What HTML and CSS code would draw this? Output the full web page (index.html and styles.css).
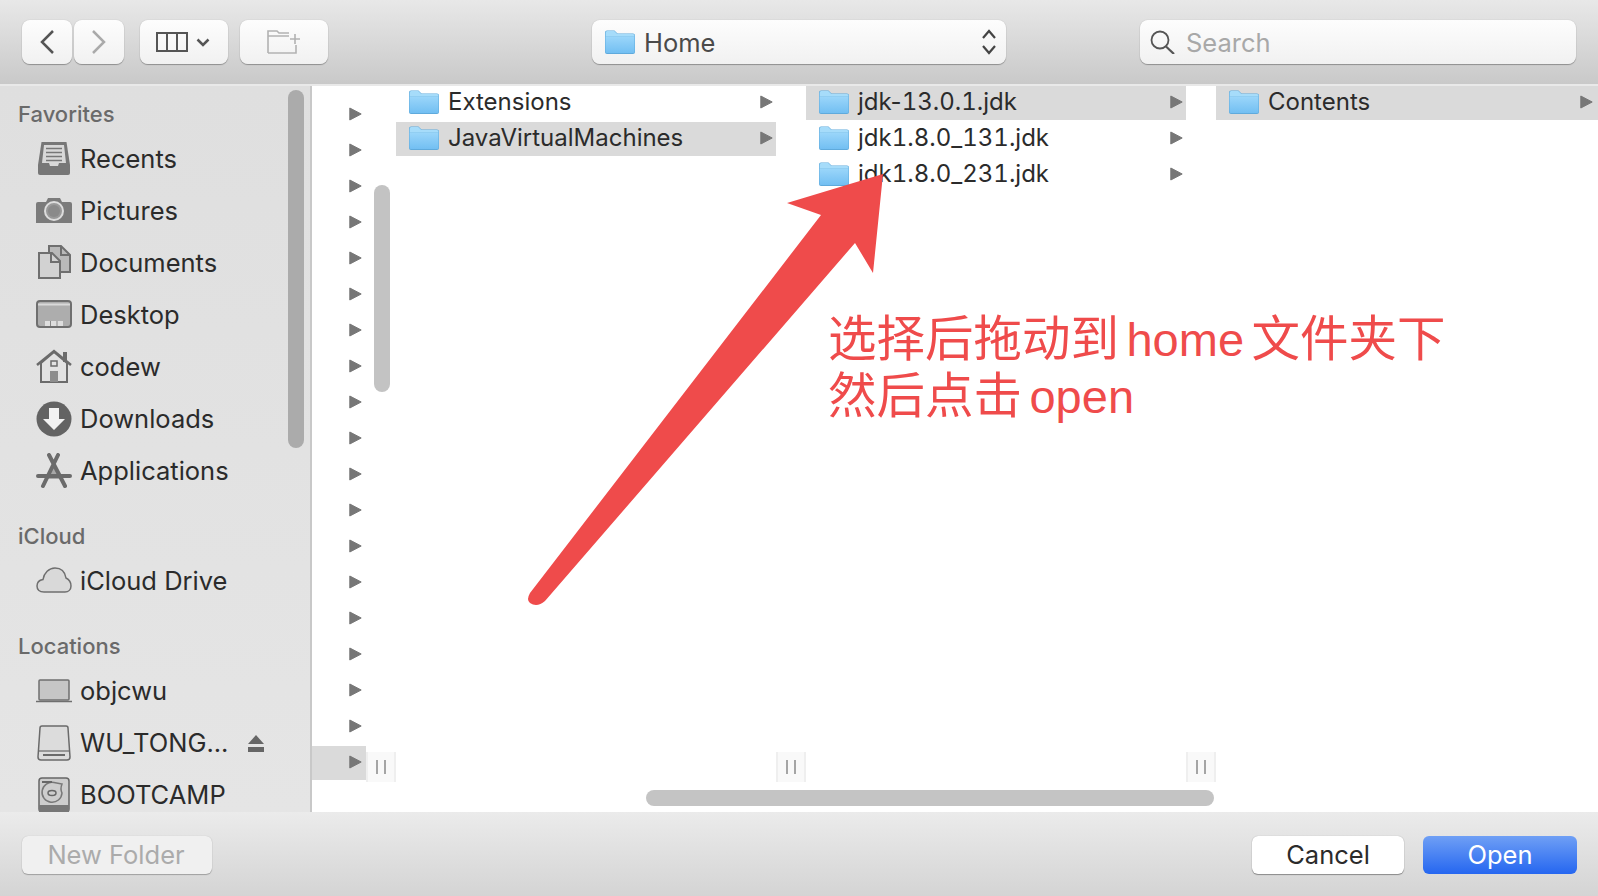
FILE: index.html
```html
<!DOCTYPE html>
<html lang="en">
<head>
    <meta charset="UTF-8">
    <meta name="viewport" content="width=device-width, initial-scale=1.0">
    <title>Open</title>
    <link rel="stylesheet" href="styles.css">
</head>
<body>
    <svg class="defs" width="0" height="0">
        <defs>
            <linearGradient id="folder-fill" x1="0" y1="0" x2="0" y2="1">
                <stop offset="0" stop-color="#9bd6fa"/>
                <stop offset="1" stop-color="#72bff2"/>
            </linearGradient>
            <symbol id="folder" viewBox="0 0 30 24">
                <path d="M0 2.500A2 2 0 0 1 2 .5h7.500l3 3H28a2 2 0 0 1 2 2V22a2 2 0 0 1-2 2H2a2 2 0 0 1-2-2z" fill="#5faadc"/>
                <path d="M.5 6.500h29V21.500a1.500 1.500 0 0 1-1.500 1.500H2a1.500 1.500 0 0 1-1.500-1.500z" fill="url(#folder-fill)"/>
                <path d="M.6 2.800A1.700 1.700 0 0 1 2.300 1.100h7l3 3H28a1.500 1.500 0 0 1 1.500 1.500v1H.6z" fill="#a6dcfa"/>
            </symbol>
            <symbol id="tri" viewBox="0 0 13 14">
                <path d="M.8 1 12.200 7 .8 13z" fill="#777" stroke="#777" stroke-linejoin="round"/>
            </symbol>
        </defs>
    </svg>

    <div class="window">
        <header class="toolbar">
            <button class="tool nav">
                <svg width="14" height="24" viewBox="0 0 14 24"><path d="M13 1 2 12l11 11" fill="none" stroke="#555" stroke-width="2.500"/></svg>
            </button>
            <button class="tool nav forward">
                <svg width="14" height="24" viewBox="0 0 14 24"><path d="M1 1l11 11L1 23" fill="none" stroke="#aaa" stroke-width="2.500"/></svg>
            </button>
            <button class="tool view-btn">
                <svg width="32" height="20" viewBox="0 0 32 20"><path d="M1 1h30v18H1zM11 1v18M21 1v18" fill="none" stroke="#555" stroke-width="2"/></svg>
                <svg width="14" height="9" viewBox="0 0 14 9"><path d="M1.500 1.500 7 7l5.500-5.500" fill="none" stroke="#555" stroke-width="2.500"/></svg>
            </button>
            <button class="tool newfolder-btn">
                <svg width="34" height="24" viewBox="0 0 34 24"><path d="M1 23V1h9l2 2h10M1 6h21M29 15v8H1M28 4v10M23 9h10" fill="none" stroke="#b2b2b2" stroke-width="1.600"/></svg>
            </button>
            <div class="tool path-select">
                <svg class="folder-icon" width="30" height="24"><use href="#folder"/></svg>
                <span class="path-name">Home</span>
                <svg class="updown" width="16" height="26" viewBox="0 0 16 26"><path d="M2 9l6-7 6 7M2 17l6 7 6-7" fill="none" stroke="#444" stroke-width="2.200"/></svg>
            </div>
            <div class="tool search">
                <svg width="26" height="24" viewBox="0 0 26 24"><circle cx="10" cy="10" r="8.500" fill="none" stroke="#555" stroke-width="1.800"/><path d="M16 16.500 24 24" stroke="#555" stroke-width="2.200"/></svg>
                <span class="search-text">Search</span>
            </div>
        </header>

        <main class="content">
            <nav class="sidebar">
                <div class="side-head">Favorites</div>
                <div class="side-item">
                    <svg width="36" height="36" viewBox="0 0 36 36"><path d="M5.500 1h25L34 24v8a2 2 0 0 1-2 2H4a2 2 0 0 1-2-2v-8z" fill="#777"/><path d="M8 4h20l2 18h-7l-1 3h-8l-1-3H6z" fill="#d8d8d8"/><path d="M10 7.500h16M10 11.500h16M10 15.500h16M10 19.500h16" stroke="#777" stroke-width="1.500"/></svg>
                    <span>Recents</span>
                </div>
                <div class="side-item">
                    <svg width="36" height="36" viewBox="0 0 36 36"><path d="M2 9h8l2-4h12l2 4h8a2 2 0 0 1 2 2v19H0V11a2 2 0 0 1 2-2z" fill="#7b7b7b"/><circle cx="18" cy="18" r="9" fill="#999" stroke="#ddd" stroke-width="2"/><circle cx="18" cy="18" r="6" fill="#8a8a8a"/></svg>
                    <span>Pictures</span>
                </div>
                <div class="side-item">
                    <svg width="36" height="36" viewBox="0 0 36 36"><path d="M13 1h12l9 9v17H13z" fill="#b9b9b9" stroke="#6f6f6f" stroke-width="2"/><path d="M25 1v9h9" fill="none" stroke="#6f6f6f" stroke-width="2"/><path d="M3 8h13l8 8v17H3z" fill="#d2d2d2" stroke="#6f6f6f" stroke-width="2"/><path d="M15 8v9h9" fill="none" stroke="#6f6f6f" stroke-width="2"/></svg>
                    <span>Documents</span>
                </div>
                <div class="side-item">
                    <svg width="36" height="36" viewBox="0 0 36 36"><rect x="1" y="4" width="34" height="26" rx="3" fill="#adadad" stroke="#6f6f6f" stroke-width="2"/><path d="M2 7.500h32" stroke="#d9d9d9" stroke-width="2"/><path d="M9 24h18v5H9z" fill="#dedede"/><path d="M14.500 24v5M21 24v5" stroke="#8a8a8a"/></svg>
                    <span>Desktop</span>
                </div>
                <div class="side-item">
                    <svg width="36" height="36" viewBox="0 0 36 36"><path d="M5 14 18 3l13 11v19H5z" fill="#e2e2e2" stroke="#6b6b6b" stroke-width="2"/><path d="M1 16 18 2l17 14" fill="none" stroke="#6b6b6b" stroke-width="2.500"/><path d="M27 3h4v10h-4z" fill="#6b6b6b"/><rect x="15" y="12" width="6" height="5" fill="none" stroke="#6b6b6b" stroke-width="1.500"/><path d="M14 22h8v11h-8z" fill="#8d8d8d"/></svg>
                    <span>codew</span>
                </div>
                <div class="side-item">
                    <svg width="36" height="36" viewBox="0 0 36 36"><circle cx="18" cy="18" r="17.500" fill="#636363"/><path d="M13 7h10v11h6L18 29 7 18h6z" fill="#f2f2f2"/></svg>
                    <span>Downloads</span>
                </div>
                <div class="side-item">
                    <svg width="36" height="36" viewBox="0 0 36 36"><path d="M18 10 9 26h18z" fill="#a8a8a8"/><path d="M22 2 7 33M13 2l16 31M2 23h32" fill="none" stroke="#6b6b6b" stroke-width="4" stroke-linecap="round"/></svg>
                    <span>Applications</span>
                </div>

                <div class="side-head spaced">iCloud</div>
                <div class="side-item">
                    <svg width="36" height="36" viewBox="0 0 36 36"><path d="M8 29C3 29 1 26 1 23c0-4 3-6 6-6.500C8 10 13 5 19 5c6 0 10 4 11 10 3 1.500 5 4 5 8 0 3.500-2.500 6-6 6z" fill="#d9d9d9" stroke="#6f6f6f" stroke-width="1.500"/></svg>
                    <span>iCloud Drive</span>
                </div>

                <div class="side-head spaced">Locations</div>
                <div class="side-item">
                    <svg width="36" height="36" viewBox="0 0 36 36"><rect x="3" y="7" width="30" height="20" rx="1" fill="#c6c6c6" stroke="#6f6f6f" stroke-width="1.500"/><path d="M0 28.500h36" stroke="#6f6f6f" stroke-width="1.500"/></svg>
                    <span>objcwu</span>
                </div>
                <div class="side-item">
                    <svg width="36" height="36" viewBox="0 0 36 36"><path d="M6 1h24a2 2 0 0 1 2 2l2 29a3 3 0 0 1-3 3H5a3 3 0 0 1-3-3L4 3a2 2 0 0 1 2-2z" fill="#dcdcdc" stroke="#6a6a6a" stroke-width="1.500"/><path d="M2 26h32" stroke="#6a6a6a" stroke-width="1.200"/><path d="M7 30h22" stroke="#6a6a6a" stroke-width="2"/></svg>
                    <span>WU_TONG...</span>
                    <svg class="eject" width="16" height="17" viewBox="0 0 16 17"><path d="M8 0l8 9H0zM0 12h16v5H0z" fill="#666"/></svg>
                </div>
                <div class="side-item">
                    <svg width="36" height="36" viewBox="0 0 36 36"><rect x="3" y="1" width="30" height="34" rx="3" fill="#cdcdcd" stroke="#666" stroke-width="1.500"/><path d="M26 7C24 12 26 16 26 16A10 10 0 1 1 18 5.500z" fill="none" stroke="#777" stroke-width="1.500"/><ellipse cx="16" cy="16" rx="4" ry="2.500" fill="none" stroke="#666" stroke-width="1.500"/><path d="M6 5h10" stroke="#666" stroke-width="2"/><path d="M3 28h30v7H3z" fill="#777"/></svg>
                    <span>BOOTCAMP</span>
                </div>
                <div class="side-scroll"></div>
            </nav>

            <section class="browser">
                <div class="column first">
                    <div class="tri-row"><svg width="13" height="14"><use href="#tri"/></svg></div>
                    <div class="tri-row"><svg width="13" height="14"><use href="#tri"/></svg></div>
                    <div class="tri-row"><svg width="13" height="14"><use href="#tri"/></svg></div>
                    <div class="tri-row"><svg width="13" height="14"><use href="#tri"/></svg></div>
                    <div class="tri-row"><svg width="13" height="14"><use href="#tri"/></svg></div>
                    <div class="tri-row"><svg width="13" height="14"><use href="#tri"/></svg></div>
                    <div class="tri-row"><svg width="13" height="14"><use href="#tri"/></svg></div>
                    <div class="tri-row"><svg width="13" height="14"><use href="#tri"/></svg></div>
                    <div class="tri-row"><svg width="13" height="14"><use href="#tri"/></svg></div>
                    <div class="tri-row"><svg width="13" height="14"><use href="#tri"/></svg></div>
                    <div class="tri-row"><svg width="13" height="14"><use href="#tri"/></svg></div>
                    <div class="tri-row"><svg width="13" height="14"><use href="#tri"/></svg></div>
                    <div class="tri-row"><svg width="13" height="14"><use href="#tri"/></svg></div>
                    <div class="tri-row"><svg width="13" height="14"><use href="#tri"/></svg></div>
                    <div class="tri-row"><svg width="13" height="14"><use href="#tri"/></svg></div>
                    <div class="tri-row"><svg width="13" height="14"><use href="#tri"/></svg></div>
                    <div class="tri-row"><svg width="13" height="14"><use href="#tri"/></svg></div>
                    <div class="tri-row"><svg width="13" height="14"><use href="#tri"/></svg></div>
                    <div class="tri-row selected"><svg width="13" height="14"><use href="#tri"/></svg></div>
                    <div class="col-scroll"></div>
                    <div class="handle"></div>
                </div>
                <div class="column second">
                    <div class="file-row"><svg width="30" height="24"><use href="#folder"/></svg><span class="file-name">Extensions</span><svg class="more" width="13" height="14"><use href="#tri"/></svg></div>
                    <div class="file-row selected"><svg width="30" height="24"><use href="#folder"/></svg><span class="file-name">JavaVirtualMachines</span><svg class="more" width="13" height="14"><use href="#tri"/></svg></div>
                    <div class="handle"></div>
                </div>
                <div class="column second">
                    <div class="file-row selected"><svg width="30" height="24"><use href="#folder"/></svg><span class="file-name"><span class="plain-nums">jdk-</span>13.0.1.jdk</span><svg class="more" width="13" height="14"><use href="#tri"/></svg></div>
                    <div class="file-row"><svg width="30" height="24"><use href="#folder"/></svg><span class="file-name">jdk1.8.0_131.jdk</span><svg class="more" width="13" height="14"><use href="#tri"/></svg></div>
                    <div class="file-row"><svg width="30" height="24"><use href="#folder"/></svg><span class="file-name">jdk1.8.0_231.jdk</span><svg class="more" width="13" height="14"><use href="#tri"/></svg></div>
                    <div class="handle"></div>
                </div>
                <div class="column last">
                    <div class="file-row selected"><svg width="30" height="24"><use href="#folder"/></svg><span class="file-name">Contents</span><svg class="more" width="13" height="14"><use href="#tri"/></svg></div>
                </div>
                <div class="h-scroll"></div>
            </section>
        </main>

        <footer class="footer">
            <button class="btn disabled">New Folder</button>
            <button class="btn cancel">Cancel</button>
            <button class="btn primary">Open</button>
        </footer>

        <svg class="arrow" width="370" height="450" viewBox="520 165 370 450">
            <path d="M883 174 787 203 821 215 530 593Q526 600 530 603 537 608 545 601L855 243 873 273z" fill="#ef4b4b"/>
        </svg>
        <div class="note">选择后拖动到 <span class="note-latin">home</span> 文件夹下<br>然后点击 <span class="note-latin">open</span></div>
    </div>
</body>
</html>
```

FILE: styles.css
```css
* {
    box-sizing: border-box;
}

body {
    margin: 0;
    font-family: Inter, "Liberation Sans", sans-serif;
    color: #2b2b2b;
    overflow: hidden;
}

.defs {
    position: absolute;
}

.window {
    position: relative;
    display: flex;
    flex-direction: column;
    height: 100vh;
    background: #fff;
}

/* toolbar */
.toolbar {
    display: flex;
    height: 86px;
    padding: 20px 22px 0;
    background: linear-gradient(#e8e8e8, #c9c9c9);
    border-bottom: 2px solid #e9e9e9;
    flex-shrink: 0;
}

.tool {
    display: flex;
    align-items: center;
    height: 44px;
    padding: 0;
    border: none;
    border-radius: 8px;
    background: linear-gradient(#fdfdfd, #f1f1f1);
    box-shadow: 0 1px 1px rgba(0, 0, 0, 0.3), 0 0 1px rgba(0, 0, 0, 0.25);
}

.nav {
    width: 50px;
    justify-content: center;
}

.forward {
    margin-left: 2px;
}

.view-btn {
    width: 88px;
    margin-left: 16px;
    padding-left: 16px;
    gap: 8px;
}

.newfolder-btn {
    width: 88px;
    margin-left: 12px;
    justify-content: center;
}

.path-select {
    width: 414px;
    margin-left: 264px;
    padding-left: 13px;
}

.path-name {
    margin-left: 9px;
    font-size: 25.5px;
    color: #4a4a4a;
}

.updown {
    margin-left: auto;
    margin-right: 9px;
}

.search {
    width: 436px;
    margin-left: 134px;
    padding-left: 10px;
}

.search-text {
    margin-left: 10px;
    font-size: 25.5px;
    color: #a8a8a8;
}

/* middle */
.content {
    display: flex;
    flex: 1;
    min-height: 0;
}

.sidebar {
    position: relative;
    width: 312px;
    flex-shrink: 0;
    padding-top: 10px;
    overflow: hidden;
    background: linear-gradient(#dfdfdf, #e5e5e5);
    border-right: 2px solid #c8c8c8;
}

.side-head {
    height: 36px;
    margin-bottom: 1px;
    padding-left: 18px;
    font-size: 22px;
    font-weight: 500;
    line-height: 36px;
    color: #6a6a6a;
}

.side-head.spaced {
    margin-top: 21px;
}

.side-item {
    display: flex;
    align-items: center;
    gap: 8px;
    height: 52px;
    padding-left: 36px;
    font-size: 25.5px;
}

.side-item span {
    margin-bottom: 2px;
}

.side-item svg {
    flex-shrink: 0;
}

.side-item .eject {
    margin-left: 12px;
}

.side-scroll {
    position: absolute;
    left: 288px;
    top: 4px;
    width: 16px;
    height: 358px;
    border-radius: 8px;
    background: #ababab;
}

/* columns */
.browser {
    position: relative;
    display: flex;
    flex: 1;
    min-width: 0;
}

.column {
    position: relative;
    padding-right: 30px;
    flex-shrink: 0;
}

.column.first {
    width: 84px;
    padding-top: 12px;
}

.column.second {
    width: 410px;
}

.column.last {
    flex: 1;
    padding-right: 0;
}

.tri-row {
    display: flex;
    align-items: center;
    justify-content: flex-end;
    height: 34px;
    margin-bottom: 2px;
    padding-right: 4px;
}

.tri-row svg {
    margin-bottom: 2px;
}

.file-row {
    display: flex;
    align-items: center;
    gap: 9px;
    height: 34px;
    margin-bottom: 2px;
    padding: 0 3px 2px 13px;
    font-size: 24px;
    font-variant-numeric: tabular-nums;
}

.file-name {
    margin-bottom: 2px;
}

.plain-nums {
    font-variant-numeric: normal;
}

.more {
    margin-left: auto;
}

.column.last .file-row {
    padding-right: 5px;
}

.selected {
    background: #dadada;
}

.col-scroll {
    position: absolute;
    left: 62px;
    top: 99px;
    width: 16px;
    height: 207px;
    border-radius: 8px;
    background: #c3c3c3;
}

.handle {
    position: absolute;
    right: 0;
    bottom: 30px;
    width: 30px;
    height: 30px;
    background:
        linear-gradient(#a5a5a5, #a5a5a5) 10px 8px / 2px 14px no-repeat,
        linear-gradient(#a5a5a5, #a5a5a5) 18px 8px / 2px 14px no-repeat,
        #f9f9f9;
    border-left: 2px solid #efefef;
    border-right: 2px solid #efefef;
    background-origin: border-box;
}

.h-scroll {
    position: absolute;
    left: 334px;
    bottom: 6px;
    width: 568px;
    height: 16px;
    border-radius: 8px;
    background: #c4c4c4;
}

/* bottom bar */
.footer {
    display: flex;
    align-items: flex-start;
    gap: 19px;
    height: 84px;
    padding: 24px 21px 0 22px;
    background: linear-gradient(#ebebeb, #d4d4d4);
    flex-shrink: 0;
}

.btn {
    height: 38px;
    padding: 0;
    border: none;
    border-radius: 6px;
    font-family: inherit;
    font-size: 25.5px;
    line-height: 38px;
}

.disabled {
    width: 190px;
    margin-right: auto;
    padding-right: 2px;
    background: #f0f0f0;
    color: #ababab;
    box-shadow: 0 1px 1px rgba(0, 0, 0, 0.25), 0 0 1px rgba(0, 0, 0, 0.2);
}

.cancel {
    width: 152px;
    background: #fff;
    color: #2b2b2b;
    box-shadow: 0 1px 1px rgba(0, 0, 0, 0.35), 0 0 1px rgba(0, 0, 0, 0.3);
}

.primary {
    width: 154px;
    background: linear-gradient(#6f9ff5, #2566f0);
    color: #fff;
}

/* annotation on top of the picture */
.arrow {
    position: absolute;
    left: 520px;
    top: 165px;
}

.note {
    position: absolute;
    left: 828px;
    top: 311px;
    font-family: "Liberation Sans", "Noto Sans CJK SC", sans-serif;
    font-size: 48.5px;
    line-height: 56px;
    word-spacing: -6px;
    color: #ef4b4b;
    white-space: nowrap;
}

.note-latin {
    font-size: 47px;
}
```
